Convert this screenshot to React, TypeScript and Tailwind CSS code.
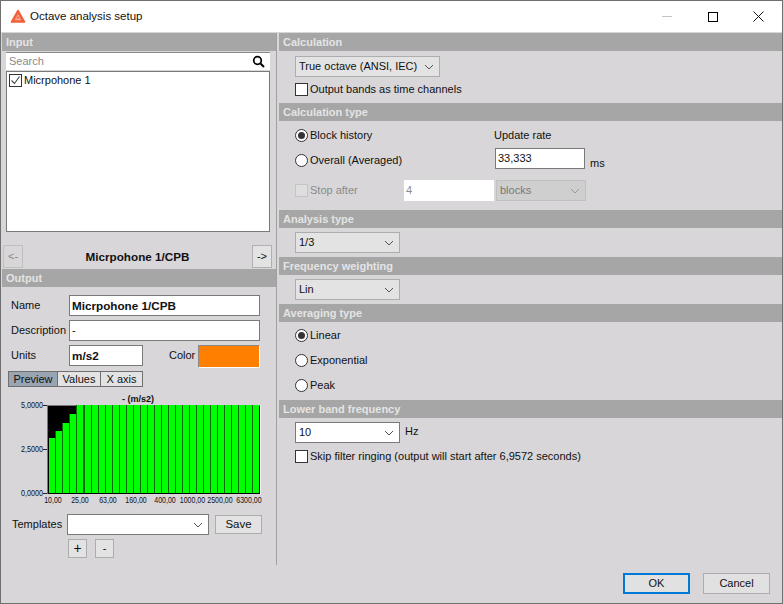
import type { ReactNode } from 'react'

const values = [3.15, 3.55, 3.95, 4.5]
const barCount = 30

const xLabels = [
  { x: 47, t: '10,00' },
  { x: 74, t: '25,00' },
  { x: 102, t: '63,00' },
  { x: 130, t: '160,00' },
  { x: 159, t: '400,00' },
  { x: 186.5, t: '1000,00' },
  { x: 214, t: '2500,00' },
  { x: 243, t: '6300,00' },
]

function Section({ title }: { title: string }) {
  return (
    <div className="h-[18px] bg-[#a6a6a6] pl-[4px] text-[11px] font-bold leading-[18px] text-[#e4e4e4]">
      {title}
    </div>
  )
}

function Chevron({ color = '#555' }: { color?: string }) {
  return (
    <svg width="10" height="6" viewBox="0 0 10 6" className="shrink-0">
      <path d="M1 1l4 4 4-4" fill="none" stroke={color} strokeWidth="1" />
    </svg>
  )
}

function Select({ label, className, white }: { label: string; className: string; white?: boolean }) {
  return (
    <div
      className={`flex h-[21px] items-center justify-between pl-[3px] pr-[5px] ${white ? 'border border-[#7a7a7a] bg-white' : 'border border-[#adadad] bg-[#e3e3e3]'} ${className}`}
    >
      <span>{label}</span>
      <Chevron />
    </div>
  )
}

function Checkbox({ label, checked, disabled }: { label: string; checked?: boolean; disabled?: boolean }) {
  return (
    <div className={`flex items-center gap-[2px] ${disabled ? 'text-[#8a8a8a]' : ''}`}>
      <div className={`flex h-[13px] w-[13px] items-center justify-center border ${disabled ? 'border-[#c4c4c4] bg-[#dedede]' : 'border-[#333] bg-white'}`}>
        {checked && (
          <svg width="11" height="11" viewBox="0 0 11 11">
            <path d="M1.5 5.5l3 3 5-7" fill="none" stroke="#444" strokeWidth="1.1" />
          </svg>
        )}
      </div>
      <span>{label}</span>
    </div>
  )
}

function Radio({ label, checked }: { label: string; checked?: boolean }) {
  return (
    <div className="flex items-center gap-[2px]">
      <div className="flex h-[13px] w-[13px] items-center justify-center rounded-full border border-[#333] bg-white">
        {checked && <div className="h-[7px] w-[7px] rounded-full bg-[#333]" />}
      </div>
      <span>{label}</span>
    </div>
  )
}

function Field({ children, className }: { children?: ReactNode; className: string }) {
  return (
    <div className={`flex h-[21px] items-center border border-[#7a7a7a] bg-white pl-[2px] ${className}`}>
      {children}
    </div>
  )
}

function Chart() {
  const top = 12
  const bottom = 100
  const scale = (bottom - top) / 5
  return (
    <svg width="262" height="112" viewBox="0 0 262 112" className="ml-[4px] mt-[6px] block">
      <text x="132" y="9" textAnchor="middle" fontSize="9" fontWeight="700" fill="#111">- (m/s2)</text>
      <rect x="41" y={top} width="213" height={bottom - top + 1} fill="#000" />
      <rect x="41" y={top} width="213" height="1" fill="#777" />
      <rect x="41" y={top} width="1" height={bottom - top + 1} fill="#777" />
      <rect x="254" y={top} width="1" height={bottom - top + 1} fill="#fff" />
      {Array.from({ length: barCount }).map((_, i) => {
        const v = i < values.length ? values[i] : 5
        const h = Math.round(v * scale)
        // the 6th bar onward sits one pixel further right, as in the plot
        const x = 43 + i * 7 + (i >= 5 ? 1 : 0)
        const gap = i === 5 ? 2 : 1
        return (
          <g key={i}>
            {i > 0 && <rect x={x - gap} y={bottom - h} width={gap} height={h} fill="#006a00" />}
            <rect x={x} y={bottom - h} width="6" height={h} fill="#00ff00" />
          </g>
        )
      })}
      {[{ y: top, t: '5,0000' }, { y: 56, t: '2,5000' }, { y: bottom, t: '0,0000' }].map((l) => (
        <g key={l.t}>
          <line x1="37" x2="41" y1={l.y + 0.5} y2={l.y + 0.5} stroke="#222" />
          <text transform={`translate(37 ${l.y + 3}) scale(0.8 1)`} textAnchor="end" fontSize="9" fill="#111">{l.t}</text>
        </g>
      ))}
      {xLabels.map((l) => (
        <text key={l.t} transform={`translate(${l.x} 110) scale(0.78 1)`} textAnchor="middle" fontSize="9" fill="#111">{l.t}</text>
      ))}
    </svg>
  )
}

function TitleBar() {
  return (
    <div className="flex h-[31px] items-center bg-white">
      <svg width="16" height="15" viewBox="0 0 16 15" className="ml-[9px]">
        <path d="M8 1.5l6.5 11.5H1.5z" fill="#f0603a" stroke="#f0603a" strokeWidth="1.6" strokeLinejoin="round" />
        <path d="M8 5l3.4 6.2H4.6z" fill="#f7a88f" />
        <path d="M8 7l1.4 2.6H6.6z" fill="#f0603a" />
      </svg>
      <span className="ml-[4px] text-[11.5px]">Octave analysis setup</span>
      <div className="ml-auto flex items-center">
        <div className="mr-[36px] h-px w-[10px] bg-[#c4c4c4]" />
        <div className="mr-[35px] h-[10px] w-[10px] border border-black" />
        <svg width="11" height="11" viewBox="0 0 11 11" className="mr-[18px]">
          <path d="M.5.5l10 10M10.5.5l-10 10" stroke="#111" strokeWidth="1" />
        </svg>
      </div>
    </div>
  )
}

function LeftPanel() {
  return (
    <div className="w-[276px] shrink-0 border-r border-[#a0a0a0] pl-px">
      <Section title="Input" />
      <div className="ml-[4px] mt-px flex h-[18px] w-[264px] items-center justify-between border-t border-[#8a8a8a] bg-white pl-[3px] pr-[5px] text-[#8a8a8a]">
        <span>Search</span>
        <svg width="13" height="13" viewBox="0 0 13 13">
          <circle cx="5.5" cy="5.5" r="3.8" fill="none" stroke="#000" strokeWidth="1.7" />
          <path d="M8.5 8.5l3.5 3.5" stroke="#000" strokeWidth="2" />
        </svg>
      </div>
      <div className="ml-[4px] mt-px h-[161px] w-[264px] border border-[#7a7a7a] bg-white pl-[2px] pt-px">
        <Checkbox label="Micrpohone 1" checked />
      </div>
      <div className="mt-[13px] flex h-[23px] items-center justify-between pl-px pr-[4px]">
        <div className="flex h-[23px] w-[20px] items-center justify-center border border-[#c0c0c0] text-[#8a8a8a]">&lt;-</div>
        <span className="text-[11.7px] font-bold">Micrpohone 1/CPB</span>
        <div className="flex h-[23px] w-[20px] items-center justify-center border border-[#b0b0b0] bg-[#e3e3e3]">-&gt;</div>
      </div>
      <div className="mt-px">
        <Section title="Output" />
      </div>
      <div className="ml-[9px] mt-[8px] flex items-center">
        <span className="w-[58px]">Name</span>
        <Field className="w-[191px] text-[11.7px] font-bold">Micrpohone 1/CPB</Field>
      </div>
      <div className="ml-[9px] mt-[4px] flex items-center">
        <span className="w-[58px]">Description</span>
        <Field className="w-[191px]">-</Field>
      </div>
      <div className="ml-[9px] mt-[4px] flex items-start">
        <span className="w-[58px] leading-[21px]">Units</span>
        <Field className="w-[74px] text-[11.7px] font-bold">m/s2</Field>
        <span className="ml-[26px] w-[29px] leading-[21px]">Color</span>
        <div className="h-[23px] w-[62px] border-b border-l border-r border-t border-b-white border-l-[#8a8a8a] border-r-white border-t-[#8a8a8a] bg-[#ff8000]" />
      </div>
      <div className="ml-[6px] mt-[3px] flex h-[16px] w-[135px] leading-[14px]">
        <div className="w-[50px] border border-[#6f6f6f] bg-[#9aa5b3] text-center">Preview</div>
        <div className="w-[43px] border-y border-r border-[#6f6f6f] bg-[#e3e3e3] text-center">Values</div>
        <div className="w-[42px] border-y border-r border-[#6f6f6f] bg-[#e3e3e3] text-center">X axis</div>
      </div>
      <Chart />
      <div className="ml-[10px] mt-[9px] flex items-center">
        <span className="w-[55px]">Templates</span>
        <Select label="" white className="w-[142px]" />
        <div className="ml-[6px] flex h-[19px] w-[47px] items-center justify-center border border-[#adadad] bg-[#e3e3e3] text-[11.5px]">Save</div>
      </div>
      <div className="ml-[66px] mt-[4px] flex gap-[8px]">
        <div className="flex h-[19px] w-[19px] items-center justify-center border border-[#adadad] bg-[#e3e3e3] text-[14px]">+</div>
        <div className="flex h-[19px] w-[19px] items-center justify-center border border-[#adadad] bg-[#e3e3e3]">-</div>
      </div>
    </div>
  )
}

function RightPanel() {
  return (
    <div className="min-w-0 flex-1 pl-[2px]">
      <Section title="Calculation" />
      <div className="pl-[16px]">
        <Select label="True octave (ANSI, IEC)" className="mt-[5px] w-[145px]" />
        <div className="mt-[5px]">
          <Checkbox label="Output bands as time channels" />
        </div>
      </div>
      <div className="mt-[6px]">
        <Section title="Calculation type" />
      </div>
      <div className="flex pl-[16px]">
        <div className="w-[200px] pt-[7px]">
          <Radio label="Block history" checked />
          <div className="mt-[10px]">
            <Radio label="Overall (Averaged)" />
          </div>
        </div>
        <div className="pt-[7px]">
          <div className="-ml-px h-[20px] leading-[15px]">Update rate</div>
          <div className="flex h-[21px] items-start">
            <Field className="w-[90px]">33,333</Field>
            <span className="ml-[5px] mt-[8px] leading-[15px]">ms</span>
          </div>
        </div>
      </div>
      <div className="mt-[11px] flex items-center pl-[16px]">
        <div className="w-[109px]">
          <Checkbox label="Stop after" disabled />
        </div>
        <div className="flex h-[21px] w-[90px] items-center bg-white pl-[2px] text-[#8a8a8a]">4</div>
        <div className="ml-[2px] flex h-[21px] w-[90px] items-center justify-between border border-[#c0c0c0] bg-[#cfcfcf] pl-[3px] pr-[5px] text-[#777]">
          <span>blocks</span>
          <Chevron color="#999" />
        </div>
      </div>
      <div className="mt-[9px]">
        <Section title="Analysis type" />
      </div>
      <Select label="1/3" className="ml-[16px] mt-[4px] w-[105px]" />
      <div className="mt-[4px]">
        <Section title="Frequency weighting" />
      </div>
      <Select label="Lin" className="ml-[16px] mt-[4px] w-[105px]" />
      <div className="mt-[4px]">
        <Section title="Averaging type" />
      </div>
      <div className="pl-[16px] pt-[6px]">
        <Radio label="Linear" checked />
        <div className="mt-[10px]">
          <Radio label="Exponential" />
        </div>
        <div className="mt-[10px]">
          <Radio label="Peak" />
        </div>
      </div>
      <div className="mt-[7px]">
        <Section title="Lower band frequency" />
      </div>
      <div className="mt-[4px] flex items-start pl-[16px]">
        <Select label="10" white className="w-[105px]" />
        <span className="ml-[5px] leading-[18px]">Hz</span>
      </div>
      <div className="mt-[6px] pl-[16px]">
        <Checkbox label="Skip filter ringing (output will start after 6,9572 seconds)" />
      </div>
    </div>
  )
}

export default function App() {
  return (
    <div className="flex h-[604px] w-[783px] flex-col overflow-hidden border-x border-b border-t border-[#707070] bg-[#d8d6d9] font-['Liberation_Sans',sans-serif] text-[11px] leading-[15px] text-[#111]">
      <TitleBar />
      <div className="flex h-[533px] shrink-0 pt-px">
        <LeftPanel />
        <RightPanel />
      </div>
      <div className="flex flex-1 items-start justify-end gap-[13px] pr-[12px] pt-[8px]">
        <div className="flex h-[21px] w-[67px] items-center justify-center border-2 border-[#0078d7] bg-[#e1e1e1]">OK</div>
        <div className="flex h-[21px] w-[67px] items-center justify-center border border-[#adadad] bg-[#e1e1e1]">Cancel</div>
      </div>
    </div>
  )
}
